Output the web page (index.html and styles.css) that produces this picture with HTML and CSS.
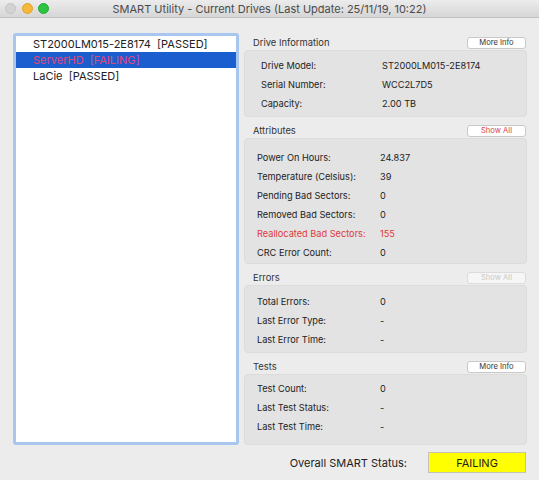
FILE: index.html
```html
<!DOCTYPE html>
<html>
<head>
<meta charset="utf-8">
<link rel="stylesheet" href="styles.css">
</head>
<body>
<div class="window">
  <header class="titlebar">
    <div class="lights">
      <span class="light close"></span>
      <span class="light min"></span>
      <span class="light max"></span>
    </div>
    <div class="title">SMART Utility - Current Drives (Last Update: 25/11/19, 10:22)</div>
    <div></div>
  </header>
  <main class="content">
    <div class="drive-list">
      <div class="drive">ST2000LM015-2E8174&nbsp; [PASSED]</div>
      <div class="drive selected">ServerHD&nbsp; [FAILING]</div>
      <div class="drive">LaCie&nbsp; [PASSED]</div>
    </div>
    <div class="panel">
      <section class="group">
        <div class="group-head"><span>Drive Information</span><button class="btn">More Info</button></div>
        <div class="box box-drive">
          <div class="row"><span>Drive Model:</span><span>ST2000LM015-2E8174</span></div>
          <div class="row"><span>Serial Number:</span><span>WCC2L7D5</span></div>
          <div class="row"><span>Capacity:</span><span>2.00 TB</span></div>
        </div>
      </section>
      <section class="group">
        <div class="group-head"><span>Attributes</span><button class="btn btn-alert">Show All</button></div>
        <div class="box box-attr">
          <div class="row"><span>Power On Hours:</span><span>24.837</span></div>
          <div class="row"><span>Temperature (Celsius):</span><span>39</span></div>
          <div class="row"><span>Pending Bad Sectors:</span><span>0</span></div>
          <div class="row"><span>Removed Bad Sectors:</span><span>0</span></div>
          <div class="row row-alert"><span>Reallocated Bad Sectors:</span><span>155</span></div>
          <div class="row"><span>CRC Error Count:</span><span>0</span></div>
        </div>
      </section>
      <section class="group">
        <div class="group-head"><span>Errors</span><button class="btn btn-disabled">Show All</button></div>
        <div class="box box-errors">
          <div class="row"><span>Total Errors:</span><span>0</span></div>
          <div class="row"><span>Last Error Type:</span><span>-</span></div>
          <div class="row"><span>Last Error Time:</span><span>-</span></div>
        </div>
      </section>
      <section class="group">
        <div class="group-head"><span>Tests</span><button class="btn">More Info</button></div>
        <div class="box box-tests">
          <div class="row"><span>Test Count:</span><span>0</span></div>
          <div class="row"><span>Last Test Status:</span><span>-</span></div>
          <div class="row"><span>Last Test Time:</span><span>-</span></div>
        </div>
      </section>
      <div class="status">
        <span>Overall SMART Status:</span>
        <div class="status-badge">FAILING</div>
      </div>
    </div>
  </main>
</div>
</body>
</html>
```

FILE: styles.css
```css
* { box-sizing: border-box; }
html, body {
  margin: 0;
  padding: 0;
  background: #ececec;
}
body {
  font-family: "Inter", "Liberation Sans", sans-serif;
  color: #222;
}
.window {
  width: 539px;
  height: 480px;
  background: #ececec;
  display: flex;
  flex-direction: column;
}
.titlebar {
  height: 18px;
  display: grid;
  grid-template-columns: 1fr auto 1fr;
  align-items: center;
  background: linear-gradient(#ececec, #d6d6d6);
  border-bottom: 1px solid #c2c2c2;
}
.lights {
  display: flex;
  gap: 5.5px;
  padding-left: 5px;
  align-items: center;
}
.light {
  width: 11px;
  height: 11px;
  border-radius: 50%;
  display: block;
}
.light.close { background: #d3d3d3; border: 1px solid #c2c2c2; }
.light.min { background: #f6b73a; border: 1px solid #e0a22c; }
.light.max { background: #2cc441; border: 1px solid #22a934; }
.title {
  font-size: 11px;
  color: #4b4b4b;
  white-space: nowrap;
}
.content {
  display: flex;
  padding: 15px 0 0 13px;
}
.drive-list {
  width: 226px;
  height: 412px;
  background: #fff;
  border: 3px solid #a9c6ef;
  border-radius: 3px;
  font-size: 11px;
}
.drive {
  height: 16px;
  line-height: 16px;
  padding-left: 17px;
  color: #222;
  white-space: nowrap;
}
.drive.selected {
  background: #1a5ecf;
  color: #e2477a;
}
.panel {
  width: 283px;
  margin-left: 5px;
  padding-top: 3px;
  display: flex;
  flex-direction: column;
}
.group + .group { margin-top: 7px; }
.group-head {
  height: 13px;
  display: flex;
  justify-content: space-between;
  align-items: center;
  padding-left: 9px;
  padding-right: 1px;
  font-size: 9.4px;
  color: #333;
}
.btn {
  width: 59px;
  height: 12px;
  padding: 0;
  border: 1px solid #c9c9c9;
  border-radius: 3px;
  background: #fff;
  font-family: inherit;
  font-size: 7.6px;
  color: #333;
  line-height: 10px;
}
.btn-alert { color: #d9414a; }
.btn-disabled { color: #c9c9c9; background: #f6f6f6; border-color: #dcdcdc; }
.box {
  margin-top: 1px;
  background: #e3e3e3;
  border: 1px solid #dcdcdc;
  border-radius: 4px;
  padding-left: 12px;
  font-size: 9.2px;
}
.box-drive { padding-top: 5px; padding-bottom: 3px; padding-left: 16px; }
.box-drive .row { grid-template-columns: 121px auto; }
.box-attr { padding-top: 9px; padding-bottom: 1px; }
.box-errors { padding-top: 6px; padding-bottom: 3px; }
.box-tests { padding-top: 4px; padding-bottom: 8px; }
.row {
  display: grid;
  grid-template-columns: 123px auto;
  height: 19px;
  align-items: center;
  white-space: nowrap;
}
.row-alert { color: #e0393e; }
.status {
  margin-top: 7px;
  display: flex;
  justify-content: flex-end;
  align-items: center;
  gap: 21px;
  padding-right: 1px;
  font-size: 11px;
  color: #222;
}
.status-badge {
  width: 98px;
  height: 21px;
  background: #ffff00;
  border: 1px solid #c4c4b0;
  display: flex;
  align-items: center;
  justify-content: center;
  color: #222;
}
```
